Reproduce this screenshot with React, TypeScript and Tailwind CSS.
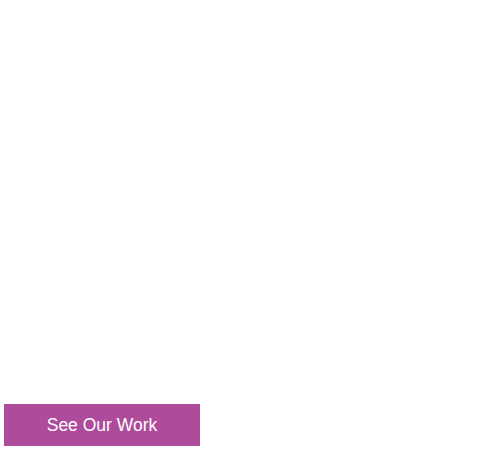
import React from 'react';

const App: React.FC = () => {
  return (
    <div className="h-[449px] w-[480px] bg-white flex flex-col justify-end pl-[4px] pb-[3px]">
      <button
        className="w-[196px] h-[42px] bg-[#ae4b9b] text-white text-[17.5px] pt-[1px] flex items-center justify-center"
        style={{ fontFamily: '"Liberation Sans", Arial, sans-serif' }}
      >
        See Our Work
      </button>
    </div>
  );
};

export default App;
